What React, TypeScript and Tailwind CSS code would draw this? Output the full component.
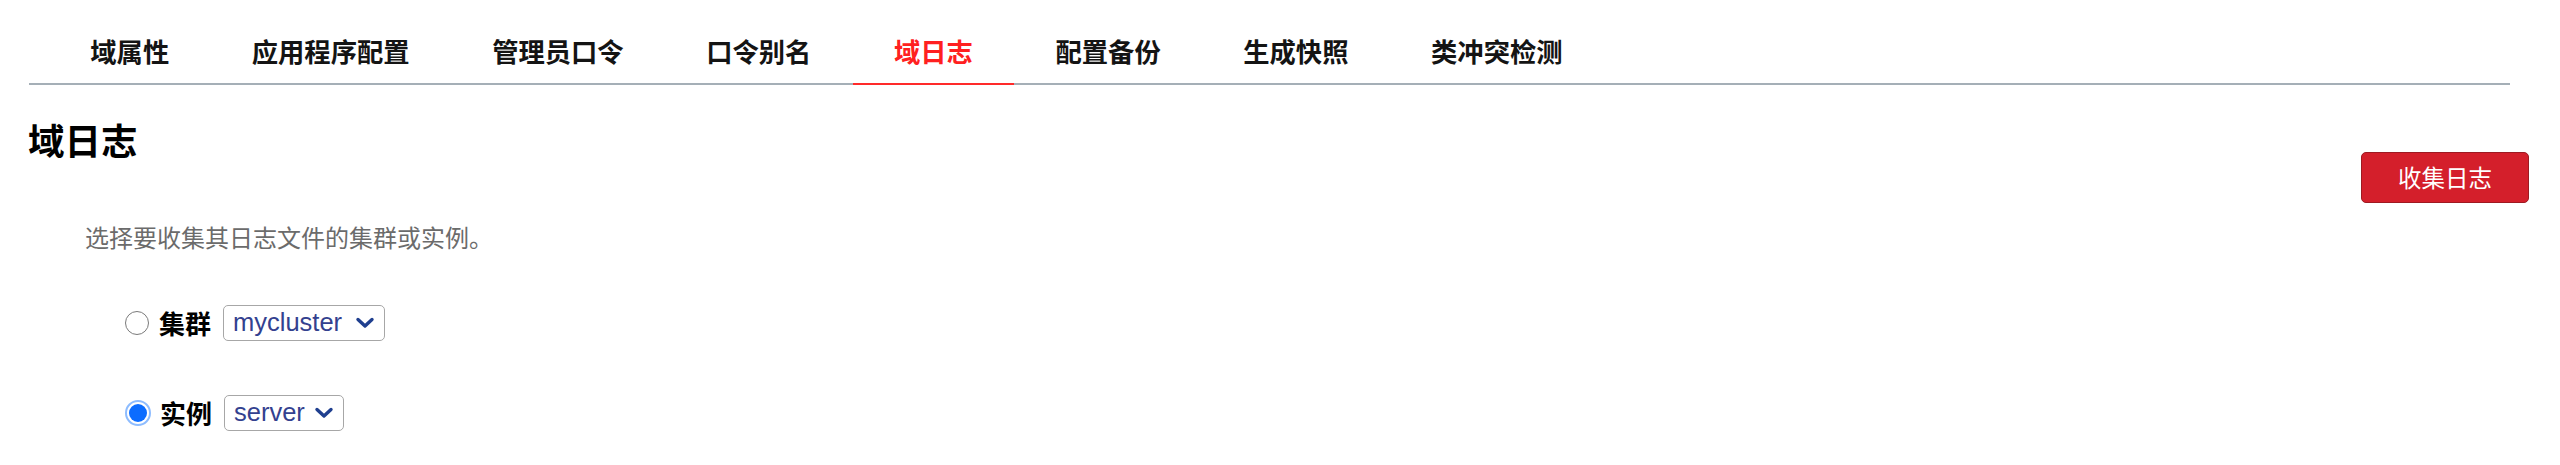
import React from "react";

const tabs = ["域属性", "应用程序配置", "管理员口令", "口令别名", "域日志", "配置备份", "生成快照", "类冲突检测"];

function Chevron() {
  return (
    <svg width="20" height="14" viewBox="0 0 20 14" className="shrink-0">
      <path d="M3 3.5 L10 10 L17 3.5" fill="none" stroke="#1f3f8f" strokeWidth="3.4" strokeLinecap="round" strokeLinejoin="round" />
    </svg>
  );
}

function Select({ value, width }: { value: string; width: string }) {
  return (
    <div className={`flex h-[36px] items-center justify-between rounded-[5px] border border-[#a7a7a7] bg-white pl-[9px] pr-[9px] ${width}`}>
      <span className="text-[25.5px] leading-none text-[#33418f]" style={{ fontFamily: '"Liberation Sans", Arial, sans-serif' }}>{value}</span>
      <Chevron />
    </div>
  );
}

function Radio({ checked }: { checked: boolean }) {
  if (checked) {
    return (
      <div className="flex h-[26px] w-[26px] items-center justify-center rounded-full border-[2px] border-[#8dbcff] bg-white">
        <div className="h-[18px] w-[18px] rounded-full bg-[#0b6cff]" />
      </div>
    );
  }
  return <div className="h-[24px] w-[24px] rounded-full border-[1.5px] border-[#7a7a7a] bg-white" />;
}

export default function App() {
  return (
    <div className="h-[465px] w-full bg-white text-black" style={{ fontFamily: '"Noto Sans CJK SC", "Liberation Sans", sans-serif' }}>
      <div className="ml-[29px] mr-[50px] flex border-b-2 border-[#a5afb7] pl-[20px] pt-[20px]">
        {tabs.map((t) => {
          const active = t === "域日志";
          return (
            <div
              key={t}
              className={`-mb-[2px] flex h-[65px] items-center px-[41.3px] text-[26.3px] font-bold leading-none ${active ? "border-b-2 border-[#ff2a2a] text-[#ff2020]" : "border-b-2 border-transparent text-[#141414]"}`}
            >
              {t}
            </div>
          );
        })}
      </div>

      <div className="flex items-start justify-between pl-[28px] pr-[31px]">
        <h2 className="mt-[31px] text-[36.5px] font-bold leading-[48px] text-black">域日志</h2>
        <button className="mt-[67px] flex h-[51px] w-[168px] items-center justify-center rounded-[5px] border border-[#9e1a22] bg-[#d41f2b] text-[23.5px] text-white">
          收集日志
        </button>
      </div>

      <p className="mt-[18px] pl-[85px] text-[24px] leading-[32px] text-[#6b6b6b]">选择要收集其日志文件的集群或实例。</p>

      <div className="mt-[52px] flex flex-col gap-[54px] pl-[125px]">
        <div className="flex items-center">
          <Radio checked={false} />
          <span className="ml-[10px] mr-[12px] text-[26px] font-bold leading-none">集群</span>
          <Select value="mycluster" width="w-[162px]" />
        </div>
        <div className="flex items-center">
          <Radio checked={true} />
          <span className="ml-[9px] mr-[12px] text-[26px] font-bold leading-none">实例</span>
          <Select value="server" width="w-[120px]" />
        </div>
      </div>
    </div>
  );
}
